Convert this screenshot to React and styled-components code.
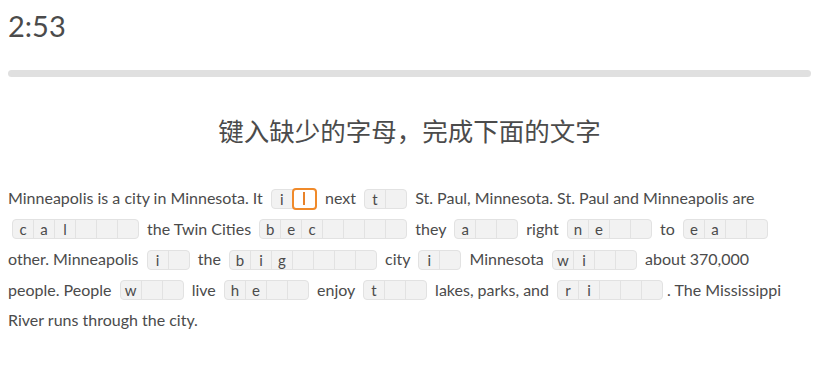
import React from 'react'
import styled, { createGlobalStyle } from 'styled-components'

const GlobalStyle = createGlobalStyle`
  body {
    margin: 0;
    background: #ffffff;
    font-family: Lato, "Noto Sans", sans-serif;
    color: #4b4b4b;
  }
`

// text pieces and letter boxes; a box lists typed letters, then empty cells
const passage = [
  'Minneapolis is a city in Minnesota. It',
  { typed: ['i'], empty: 1, active: true },
  'next',
  { typed: ['t'], empty: 1 },
  'St. Paul, Minnesota. St. Paul and Minneapolis are',
  { typed: ['c', 'a', 'l'], empty: 3 },
  'the Twin Cities',
  { typed: ['b', 'e', 'c'], empty: 4 },
  'they',
  { typed: ['a'], empty: 2 },
  'right',
  { typed: ['n', 'e'], empty: 2 },
  'to',
  { typed: ['e', 'a'], empty: 2 },
  'other. Minneapolis',
  { typed: ['i'], empty: 1 },
  'the',
  { typed: ['b', 'i', 'g'], empty: 4 },
  'city',
  { typed: ['i'], empty: 1 },
  'Minnesota',
  { typed: ['w', 'i'], empty: 2 },
  'about 370,000 people. People',
  { typed: ['w'], empty: 2 },
  'live',
  { typed: ['h', 'e'], empty: 2 },
  'enjoy',
  { typed: ['t'], empty: 2 },
  'lakes, parks, and',
  { typed: ['r', 'i'], empty: 3 },
  '. The Mississippi River runs through the city.',
]

function LetterBox({ typed, empty, active }) {
  const cells = []
  typed.forEach((ch, i) => cells.push(<Cell key={'t' + i}>{ch}</Cell>))
  for (let i = 0; i < empty; i++) {
    if (active && i === 0) {
      cells.push(
        <ActiveCell key={'e' + i}>
          <Caret />
        </ActiveCell>
      )
    } else {
      cells.push(<Cell key={'e' + i} />)
    }
  }
  return <Box>{cells}</Box>
}

export default function App() {
  return (
    <Page>
      <GlobalStyle />
      <Timer>2:53</Timer>
      <Progress />
      <Title>键入缺少的字母，完成下面的文字</Title>
      <Passage>
        {passage.map((part, i) => {
          if (typeof part === 'string') {
            return (
              <React.Fragment key={i}>
                {i > 0 && part[0] !== '.' ? ' ' : ''}
                {part}{' '}
              </React.Fragment>
            )
          }
          return <LetterBox key={i} {...part} />
        })}
      </Passage>
    </Page>
  )
}

const Page = styled.div`
  padding: 0 19px 0 8px;
`

const Timer = styled.div`
  font-size: 29px;
  line-height: 34px;
  padding-top: 9px;
  color: #4b4b4b;
`

const Progress = styled.div`
  margin-top: 27px;
  height: 7px;
  border-radius: 4px;
  background: #e0e0e0;
`

const Title = styled.h1`
  margin: 37px 0 0;
  text-align: center;
  font-weight: normal;
  font-size: 25.5px;
  line-height: 32px;
  color: #4b4b4b;
  font-family: "Noto Sans CJK SC", sans-serif;
`

const Passage = styled.div`
  margin-top: 37px;
  padding-right: 9px;
  font-size: 16px;
  line-height: 30.5px;
  color: #4b4b4b;
`

const Box = styled.span`
  display: inline-flex;
  vertical-align: middle;
  margin: -2px 4px 0;
  background: #f2f2f2;
  border: 1px solid #e2e2e2;
  border-radius: 4px;
  height: 20px;
  box-sizing: border-box;
`

const Cell = styled.span`
  width: 20px;
  height: 18px;
  line-height: 18px;
  text-align: center;
  font-size: 15px;
  color: #4b4b4b;
  & + & {
    border-left: 1px solid #e2e2e2;
  }
`

const ActiveCell = styled.span`
  width: 25px;
  height: 22px;
  margin: -2px -1px -2px 0;
  box-sizing: border-box;
  border: 2px solid #f08a2a;
  border-radius: 4px;
  background: #ffffff;
  display: flex;
  align-items: center;
  justify-content: center;
`

const Caret = styled.span`
  width: 2px;
  height: 13px;
  background: #e8822a;
`
